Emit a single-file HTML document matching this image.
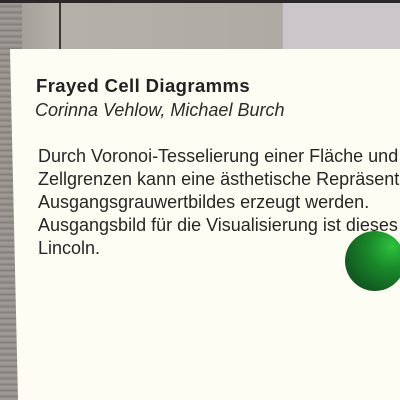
<!DOCTYPE html>
<html><head><style>
html,body{margin:0;padding:0}
body{width:400px;height:400px;overflow:hidden;position:relative;background:#9a9590;font-family:"Liberation Sans",sans-serif}
.stone{position:absolute;left:0;top:0;width:285px;height:60px;background:linear-gradient(90deg,#8f8b86 0,#a49f99 20px,#b5b0aa 60px,#b0aaa4 280px)}
.stoneL{position:absolute;left:0;top:0;width:22px;height:400px;background:repeating-linear-gradient(180deg,#7f7a76 0,#a29d98 3px,#8d8883 6px)}
.vline{position:absolute;left:59px;top:0;width:2px;height:55px;background:#3a3734}
.topbar{position:absolute;left:0;top:0;width:400px;height:3px;background:#2a2828}
.right{position:absolute;left:283px;top:3px;width:117px;height:60px;background:#cac6ca}
.panel{position:absolute;left:10px;top:49px;width:390px;height:351px;background:#fdfdf3;clip-path:polygon(0 0,100% 0,100% 100%,8px 100%)}
.t{position:absolute;left:36px;top:75px;font-size:18.5px;font-weight:bold;color:#222;letter-spacing:0.4px}
.a{position:absolute;left:35px;top:100px;font-size:18px;font-style:italic;color:#2a2a2a}
.bw{position:absolute;left:38px;top:145px;width:362px;height:130px;overflow:hidden}
.b{font-size:18px;line-height:23px;color:#262626;white-space:nowrap}
.s{position:absolute;left:345px;top:231px;width:55px;height:60px;overflow:hidden}
.s div{width:60px;height:60px;border-radius:50%;background:radial-gradient(circle at 78% 25%,#2ec23e 0,#1a8a2a 35%,#125a22 75%,#0f4d1d 100%)}
</style></head><body>
<div class="stone"></div><div class="stoneL"></div><div class="vline"></div><div class="right"></div><div class="topbar"></div>
<div class="panel"></div>
<div class="t">Frayed Cell Diagramms</div>
<div class="a">Corinna Vehlow, Michael Burch</div>
<div class="bw"><div class="b">Durch Voronoi-Tesselierung einer Fläche und<br>Zellgrenzen kann eine ästhetische Repräsentation<br>Ausgangsgrauwertbildes erzeugt werden.<br>Ausgangsbild für die Visualisierung ist dieses<br>Lincoln.</div></div>
<div class="s"><div></div></div>
</body></html>
